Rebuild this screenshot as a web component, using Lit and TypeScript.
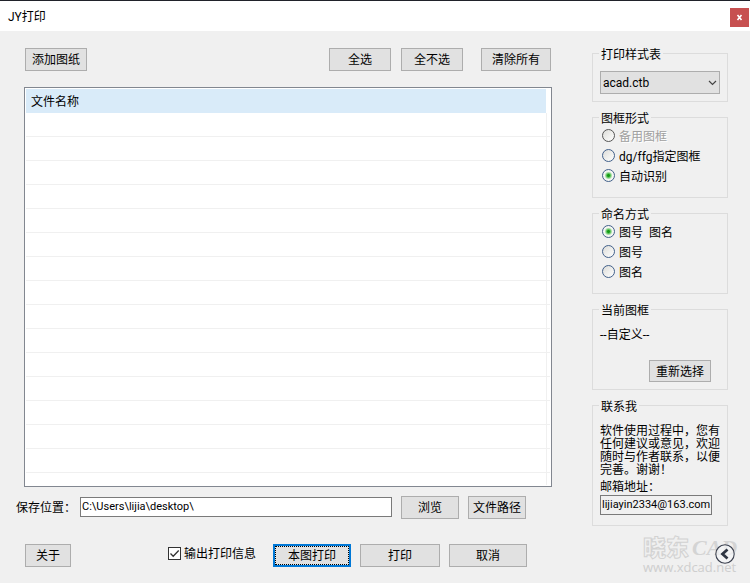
import { LitElement, html, css } from "lit";
import { customElement, property, state } from "lit/decorators.js";
import { classMap } from "lit/directives/class-map.js";

const controls = css`
  * {
    box-sizing: border-box;
  }
  button,
  input,
  select {
    font: inherit;
    color: inherit;
    margin: 0;
  }
  .btn {
    height: 23px;
    padding: 2px 0 0;
    border: 1px solid #adadad;
    border-radius: 0;
    background: #e1e1e1;
    line-height: 19px;
    text-align: center;
    white-space: nowrap;
  }
`;

interface Choice {
  text: string;
  disabled?: boolean;
}

@customElement("group-box")
export class GroupBox extends LitElement {
  @property() caption = "";

  static styles = css`
    :host {
      display: block;
    }
    .box {
      margin: 0;
      min-width: 0;
      height: 100%;
      box-sizing: border-box;
      border: 1px solid #dcdcdc;
      padding: 0 6px;
    }
    .caption {
      height: 15px;
      line-height: 18px;
      padding: 0 2px;
    }
  `;

  render() {
    return html`<fieldset class="box">
      <legend class="caption">${this.caption}</legend>
      <slot></slot>
    </fieldset>`;
  }
}

@customElement("radio-list")
export class RadioList extends LitElement {
  @property() name = "";
  @property({ attribute: false }) choices: Choice[] = [];
  @property({ type: Number }) selected = 0;

  static styles = [
    controls,
    css`
      :host {
        display: block;
        padding: 2px 0 0 3px;
      }
      .choice {
        display: flex;
        align-items: center;
        gap: 4px;
        height: 20px;
        white-space: pre;
      }
      .off {
        color: #a0a0a0;
        text-shadow: 1px 1px #fff;
      }
      .dot {
        appearance: none;
        width: 13px;
        height: 13px;
        margin-bottom: 3px;
        border: 1px solid #42608a;
        border-radius: 50%;
        background: linear-gradient(135deg, #dcdcd8, #fff);
      }
      .dot:disabled {
        border-color: #555;
      }
      .dot:checked {
        background: radial-gradient(circle, #169a16 0 1px, #5cc45c 2px, #f4f6f2 4px);
      }
    `,
  ];

  render() {
    return this.choices.map(
      (c, i) => html`<label class=${classMap({ choice: true, off: !!c.disabled })}
        ><input
          class="dot"
          type="radio"
          name=${this.name}
          ?disabled=${c.disabled}
          .checked=${i === this.selected}
          @change=${() => (this.selected = i)}
        /><span>${c.text}</span></label
      >`
    );
  }
}

@customElement("app-root")
export class AppRoot extends LitElement {
  @state() private folder = "C:\\Users\\lijia\\desktop\\";

  private rows = Array.from({ length: 16 });
  private frames: Choice[] = [
    { text: "备用图框", disabled: true },
    { text: "dg/ffg指定图框" },
    { text: "自动识别" },
  ];
  private naming: Choice[] = [{ text: "图号  图名" }, { text: "图号" }, { text: "图名" }];

  static styles = [
    controls,
    css`
      :host {
        display: flex;
        flex-direction: column;
        position: relative;
        min-height: 100vh;
        box-sizing: border-box;
        background: #f0f0f0;
        color: #000;
        font: 12px/16px Roboto, "Noto Sans CJK SC", sans-serif;
      }
      .title {
        display: flex;
        align-items: center;
        justify-content: space-between;
        height: 31px;
        padding: 2px 1px 0 8px;
        border-top: 1px solid #20222a;
        background: #fff;
      }
      .name {
        margin: 0;
        font: inherit;
      }
      .close {
        display: grid;
        place-items: center;
        width: 19px;
        height: 19px;
        padding: 0;
        border: 0;
        background: #c75050;
        color: #fff;
      }
      .content {
        display: grid;
        grid-template-columns: minmax(0, 1fr) 136px;
        gap: 40px;
        padding: 15px 22px 16px 16px;
      }
      .main {
        padding-top: 2px;
      }
      .tools,
      .path,
      .actions {
        display: flex;
        align-items: center;
      }
      .tools {
        justify-content: space-between;
        margin-left: 9px;
        padding-right: 1px;
      }
      .picks {
        display: flex;
        gap: 10px;
      }
      .w46 {
        width: 46px;
      }
      .w58 {
        width: 58px;
      }
      .w62 {
        width: 62px;
      }
      .w70 {
        width: 70px;
        margin-left: 8px;
      }
      .w78 {
        width: 78px;
      }
      .w80 {
        width: 80px;
      }
      .list {
        margin: 16px 0 9px 8px;
        padding: 1px;
        border: 1px solid #828790;
        background: #fff;
      }
      .files {
        width: 100%;
        border-collapse: separate;
        border-spacing: 0;
        table-layout: fixed;
      }
      .head {
        height: 24px;
        padding: 1px 5px 0;
        background: #d9ebf9;
        font-weight: normal;
        text-align: left;
      }
      .edge {
        width: 4px;
        padding: 0;
      }
      .cell {
        height: 24px;
        padding: 0;
        border-bottom: 1px solid #f0f0f0;
      }
      .side {
        border-left: 1px solid #f0f0f0;
      }
      .row:last-child .cell {
        height: 12px;
        border-bottom: 0;
      }
      .path {
        padding-right: 26px;
      }
      .where {
        width: 64px;
      }
      .field {
        height: 20px;
        border: 1px solid #7a7a7a;
        border-radius: 0;
        padding: 0 1px 1px;
        font-size: 11px;
        background: #fff;
      }
      .folder {
        flex: 1;
        min-width: 0;
        margin: 0 9px 2px 0;
      }
      .last {
        margin-left: 9px;
      }
      .actions {
        justify-content: space-between;
        margin: 25px 25px 0 9px;
      }
      .check {
        display: flex;
        align-items: center;
        gap: 3px;
        padding-bottom: 4px;
      }
      .box {
        display: grid;
      }
      .tick,
      .mark {
        grid-area: 1 / 1;
        width: 13px;
        height: 13px;
      }
      .tick {
        appearance: none;
        border: 1px solid #333;
        background: #fff;
      }
      .mark {
        pointer-events: none;
        visibility: hidden;
      }
      .tick:checked + .mark {
        visibility: visible;
      }
      .run {
        display: flex;
        gap: 9px;
      }
      .ends {
        display: flex;
        align-items: center;
        gap: 17px;
      }
      .primary {
        border: 2px solid #0078d7;
        padding: 0;
      }
      .focus {
        display: block;
        height: 19px;
        border: 1px dotted #000;
        line-height: 18px;
      }
      .groups {
        display: flex;
        flex-direction: column;
        gap: 8px;
      }
      .g-style {
        height: 56px;
      }
      .g-mid {
        height: 88px;
      }
      .g-mail {
        height: 128px;
      }
      .combo {
        display: grid;
        align-items: center;
        margin: 10px 1px 0;
      }
      .select {
        grid-area: 1 / 1;
        appearance: none;
        height: 23px;
        width: 100%;
        padding: 0 2px;
        border: 1px solid #adadad;
        border-radius: 0;
        background: #e1e1e1;
      }
      .chevron {
        grid-area: 1 / 1;
        justify-self: end;
        margin-right: 3px;
        pointer-events: none;
      }
      .current {
        margin: 10px 1px 17px;
      }
      .again {
        display: block;
        height: 22px;
        margin: 0 10px 0 auto;
      }
      .note {
        margin: 12px 0 2px 1px;
        line-height: 13px;
      }
      .mail {
        display: block;
        padding-left: 1px;
      }
      .address {
        display: block;
        width: 112px;
        margin: 0 0 0 1px;
        background: #f0f0f0;
      }
      .brand {
        position: absolute;
        right: 10px;
        bottom: 5px;
        width: 98px;
        height: 44px;
        overflow: visible;
        pointer-events: none;
      }
      .back {
        position: absolute;
        right: 15px;
        bottom: 19px;
        width: 20px;
        height: 20px;
        padding: 0;
        border: 0;
        background: none;
      }
      svg {
        display: block;
      }
    `,
  ];

  render() {
    return html`
      <header class="title">
        <h1 class="name">JY打印</h1>
        <button class="close" aria-label="关闭">
          <svg width="7" height="7" viewBox="0 0 7 7">
            <path d="M1.5 1 L5.5 6 M5.5 1 L1.5 6" stroke="#fff" stroke-width="1.6" />
          </svg>
        </button>
      </header>
      <main class="content">
        <section class="main">
          <div class="tools">
            <button class="btn w62">添加图纸</button>
            <div class="picks">
              <button class="btn w62">全选</button>
              <button class="btn w62">全不选</button>
              <button class="btn w70">清除所有</button>
            </div>
          </div>
          <div class="list">
            <table class="files">
              <thead>
                <tr>
                  <th class="head" scope="col">文件名称</th>
                  <td class="edge"></td>
                </tr>
              </thead>
              <tbody>
                ${this.rows.map(
                  () => html`<tr class="row">
                    <td class="cell"></td>
                    <td class="cell side"></td>
                  </tr>`
                )}
              </tbody>
            </table>
          </div>
          <div class="path">
            <label class="where" for="folder">保存位置：</label>
            <input
              class="field folder"
              id="folder"
              type="text"
              .value=${this.folder}
              @input=${(e: Event) => (this.folder = (e.target as HTMLInputElement).value)}
            />
            <button class="btn w58">浏览</button>
            <button class="btn w58 last">文件路径</button>
          </div>
          <div class="actions">
            <button class="btn w46">关于</button>
            <div class="ends">
              <label class="check">
                <span class="box">
                  <input class="tick" type="checkbox" checked />
                  <svg class="mark" viewBox="0 0 13 13">
                    <path d="M2.5 6.5 L5.2 9.3 L10.7 3.5" fill="none" stroke="#333" stroke-width="1.3" />
                  </svg>
                </span>
                <span>输出打印信息</span>
              </label>
              <div class="run">
                <button class="btn w78 primary"><span class="focus">本图打印</span></button>
                <button class="btn w80">打印</button>
                <button class="btn w78">取消</button>
              </div>
            </div>
          </div>
        </section>
        <aside class="groups">
          <group-box class="g-style" caption="打印样式表">
            <div class="combo">
              <select class="select" aria-label="打印样式表">
                <option>acad.ctb</option>
              </select>
              <svg class="chevron" width="9" height="6" viewBox="0 0 9 6">
                <path d="M1 1 L4.5 4.5 L8 1" fill="none" stroke="#444" stroke-width="1.2" />
              </svg>
            </div>
          </group-box>
          <group-box class="g-mid" caption="图框形式">
            <radio-list name="frame" .choices=${this.frames} .selected=${2}></radio-list>
          </group-box>
          <group-box class="g-mid" caption="命名方式">
            <radio-list name="naming" .choices=${this.naming} .selected=${0}></radio-list>
          </group-box>
          <group-box class="g-mid" caption="当前图框">
            <p class="current">--自定义--</p>
            <button class="btn w62 again">重新选择</button>
          </group-box>
          <group-box class="g-mail" caption="联系我">
            <p class="note">软件使用过程中，您有任何建议或意见，欢迎随时与作者联系，以便完善。谢谢！</p>
            <label class="mail" for="mail">邮箱地址：</label>
            <input class="field address" id="mail" type="text" readonly value="lijiayin2334@163.com" />
          </group-box>
        </aside>
      </main>
      <svg class="brand" viewBox="0 0 98 44">
        <g fill="#f0f0f0" stroke="#d2d2d2" stroke-width="1">
          <text x="1" y="22" font-family="Noto Sans CJK SC" font-weight="900" font-size="23">晓东</text>
        </g>
        <text
          x="50"
          y="21"
          fill="#d4d4d4"
          font-family="Liberation Serif"
          font-style="italic"
          font-weight="bold"
          font-size="22"
        >CAD</text>
        <text x="1" y="38" fill="#cecece" font-family="Open Sans" font-size="13">www.xdcad.net</text>
      </svg>
      <button class="back" aria-label="返回">
        <svg width="20" height="20" viewBox="0 0 20 20">
          <circle cx="10" cy="10" r="9.2" fill="#f4f5f7" fill-opacity="0.7" stroke="#3c4250" stroke-width="1.1" />
          <path d="M12.5 5.5 L7.5 10 L12.5 14.5" fill="none" stroke="#2e3542" stroke-width="2.8" />
        </svg>
      </button>
    `;
  }
}
